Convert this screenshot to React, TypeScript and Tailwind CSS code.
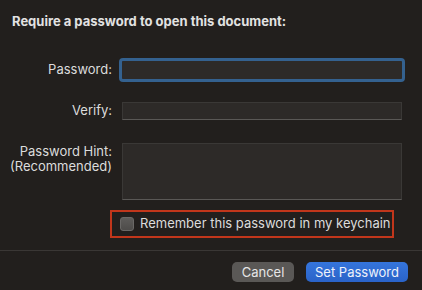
import React from 'react';

const font = { fontFamily: 'Inter, "Noto Sans", sans-serif' };

const App: React.FC = () => {
  return (
    <div className="w-[422px] h-[290px] bg-[#221f1d] text-[#dcdcdc] flex flex-col font-['Inter','Noto_Sans',sans-serif]" style={font}>
      {/* Kopf */}
      <div className="pt-[13px] px-[12px] text-[13px] leading-4 font-bold text-[#e2e2e2]">
        Require a password to open this document:
      </div>

      {/* Felder */}
      <div className="mt-[32px] grid grid-cols-[112px_280px] gap-x-[10px] gap-y-[23px] text-[13px]">
        <div className="flex items-center justify-end h-[18px]">Password:</div>
        <div className="h-[18px] bg-[#2d2a28] outline outline-[3px] outline-[#34618f] rounded-[1px]" />

        <div className="flex items-center justify-end h-[18px]">Verify:</div>
        <div className="h-[18px] bg-[#2d2a28] border border-[#3a3836] border-b-[#5a5856]" />

        <div className="text-right leading-[15px] pt-[1px]">
          Password Hint:
          <br />
          (Recommended)
        </div>
        <div className="h-[57px] bg-[#2d2a28] border border-[#3a3836] border-b-[#5a5856]" />
      </div>

      {/* Schlüsselbund */}
      <div className="mt-[10px] ml-[110px] w-[284px] h-[28px] border-2 border-[#c1361b] flex items-center pl-[8px] gap-[6px] text-[13px]">
        <span className="w-[14px] h-[14px] rounded-[3px] bg-gradient-to-b from-[#5e5c5a] to-[#4e4c4a] border border-[#6a6866]" />
        <span>Remember this password in my keychain</span>
      </div>

      {/* Aktionen */}
      <div className="mt-[12px] border-t border-[#3a3735] flex justify-end gap-[12px] pt-[11px] pr-[14px] text-[13px]">
        <button className="w-[62px] h-[20px] rounded-[5px] bg-[#5a5856] text-[#e6e6e6] leading-[20px]">Cancel</button>
        <button className="w-[102px] h-[20px] rounded-[5px] bg-gradient-to-b from-[#3575dc] to-[#2a63c8] text-[#eef2fa] leading-[20px]">
          Set Password
        </button>
      </div>
    </div>
  );
};

export default App;
